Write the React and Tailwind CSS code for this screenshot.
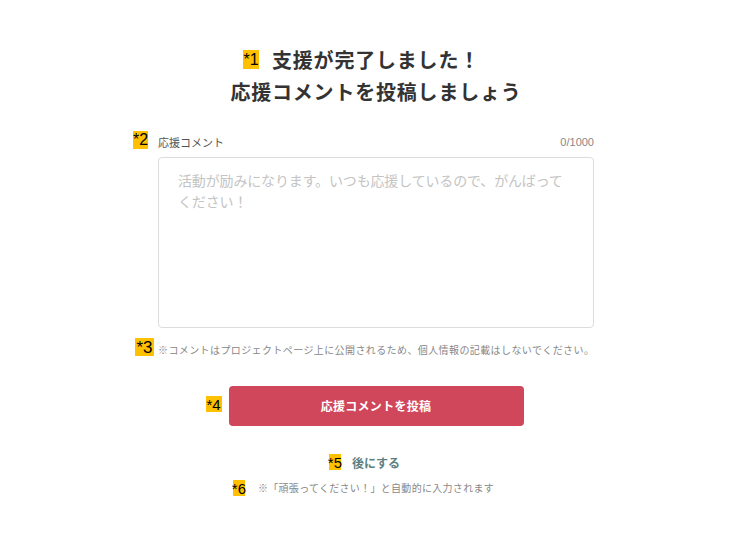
import React from "react";

function Badge({ children, className = "" }) {
  return (
    <span
      className={`absolute flex items-center justify-center bg-[#ffc000] text-black text-[15px] font-normal leading-none tracking-normal font-['Liberation_Sans',sans-serif] ${className}`}
    >
      {children}
    </span>
  );
}

export default function App() {
  return (
    <div className="min-h-[552px] w-full bg-white flex flex-col items-center pt-[44px] pl-[16px] font-['Noto_Sans_CJK_JP','Noto_Sans',sans-serif]">
      <h1 className="text-center text-[20px] font-bold leading-[32px] text-[#333333] tracking-[0.8px]">
        <span className="relative inline-block">
          <Badge className="left-[-29px] top-[6px] w-[16px] h-[19px] text-[16px]">*1</Badge>
          支援が完了しました！
        </span>
        <br />
        応援コメントを投稿しましょう
      </h1>

      <div className="w-[436px] mt-[26px]">
        <div className="relative flex items-center justify-between h-[16px]">
          <Badge className="left-[-25px] top-[-3px] w-[15px] h-[18px] text-[16px]">*2</Badge>
          <span className="text-[11px] text-[#555555]">応援コメント</span>
          <span className="text-[11px] text-[#888888] font-['Liberation_Sans',sans-serif]">0/1000</span>
        </div>
        <textarea
          className="mt-[7px] block w-[436px] h-[171px] resize-none rounded-[4px] border border-[#dddddd] px-[19px] py-[12px] text-[14px] leading-[21px] text-[#333333] placeholder:text-[#c4c4c4] outline-none tracking-[-0.15px]"
          placeholder="活動が励みになります。いつも応援しているので、がんばってください！"
        />
        <div className="relative mt-[14px] h-[16px] flex items-center">
          <Badge className="left-[-23px] top-[-4px] w-[19px] h-[18px] text-[17px]">*3</Badge>
          <span className="text-[10px] leading-[16px] text-[#888888] tracking-[0.4px] whitespace-nowrap">
            ※コメントはプロジェクトページ上に公開されるため、個人情報の記載はしないでください。
          </span>
        </div>
      </div>

      <div className="relative mt-[28px]">
        <Badge className="left-[-23px] top-[10px] w-[16px] h-[16px]">*4</Badge>
        <button className="w-[295px] h-[40px] rounded-[4px] bg-[#d0465a] text-white text-[12px] font-bold tracking-[0.3px]">
          応援コメントを投稿
        </button>
      </div>

      <div className="relative mt-[28px] h-[18px] flex items-center">
        <Badge className="left-[-23px] top-[0px] w-[12px] h-[16px]">*5</Badge>
        <span className="text-[12px] font-bold text-[#5b7f83] leading-[18px]">後にする</span>
      </div>

      <div className="relative mt-[8px] h-[16px] flex items-center">
        <Badge className="left-[-25px] top-[0px] w-[12px] h-[16px]">*6</Badge>
        <span className="text-[10px] leading-[16px] text-[#888888] tracking-[0.3px] whitespace-nowrap">
          ※「頑張ってください！」と自動的に入力されます
        </span>
      </div>
    </div>
  );
}
